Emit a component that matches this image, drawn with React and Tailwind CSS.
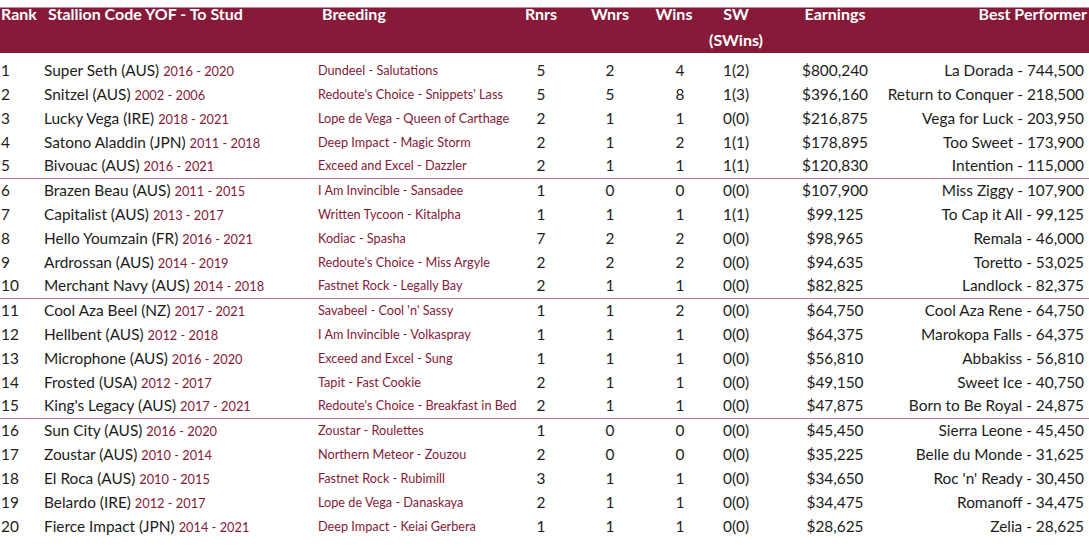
const rows = [
  ['1', 'Super Seth (AUS)', '2016 - 2020', 'Dundeel - Salutations', '5', '2', '4', '1(2)', '$800,240', 'La Dorada - 744,500'],
  ['2', 'Snitzel (AUS)', '2002 - 2006', "Redoute's Choice - Snippets' Lass", '5', '5', '8', '1(3)', '$396,160', 'Return to Conquer - 218,500'],
  ['3', 'Lucky Vega (IRE)', '2018 - 2021', 'Lope de Vega - Queen of Carthage', '2', '1', '1', '0(0)', '$216,875', 'Vega for Luck - 203,950'],
  ['4', 'Satono Aladdin (JPN)', '2011 - 2018', 'Deep Impact - Magic Storm', '2', '1', '2', '1(1)', '$178,895', 'Too Sweet - 173,900'],
  ['5', 'Bivouac (AUS)', '2016 - 2021', 'Exceed and Excel - Dazzler', '2', '1', '1', '1(1)', '$120,830', 'Intention - 115,000'],
  ['6', 'Brazen Beau (AUS)', '2011 - 2015', 'I Am Invincible - Sansadee', '1', '0', '0', '0(0)', '$107,900', 'Miss Ziggy - 107,900'],
  ['7', 'Capitalist (AUS)', '2013 - 2017', 'Written Tycoon - Kitalpha', '1', '1', '1', '1(1)', '$99,125', 'To Cap it All - 99,125'],
  ['8', 'Hello Youmzain (FR)', '2016 - 2021', 'Kodiac - Spasha', '7', '2', '2', '0(0)', '$98,965', 'Remala - 46,000'],
  ['9', 'Ardrossan (AUS)', '2014 - 2019', "Redoute's Choice - Miss Argyle", '2', '2', '2', '0(0)', '$94,635', 'Toretto - 53,025'],
  ['10', 'Merchant Navy (AUS)', '2014 - 2018', 'Fastnet Rock - Legally Bay', '2', '1', '1', '0(0)', '$82,825', 'Landlock - 82,375'],
  ['11', 'Cool Aza Beel (NZ)', '2017 - 2021', "Savabeel - Cool 'n' Sassy", '1', '1', '2', '0(0)', '$64,750', 'Cool Aza Rene - 64,750'],
  ['12', 'Hellbent (AUS)', '2012 - 2018', 'I Am Invincible - Volkaspray', '1', '1', '1', '0(0)', '$64,375', 'Marokopa Falls - 64,375'],
  ['13', 'Microphone (AUS)', '2016 - 2020', 'Exceed and Excel - Sung', '1', '1', '1', '0(0)', '$56,810', 'Abbakiss - 56,810'],
  ['14', 'Frosted (USA)', '2012 - 2017', 'Tapit - Fast Cookie', '2', '1', '1', '0(0)', '$49,150', 'Sweet Ice - 40,750'],
  ['15', "King's Legacy (AUS)", '2017 - 2021', "Redoute's Choice - Breakfast in Bed", '2', '1', '1', '0(0)', '$47,875', 'Born to Be Royal - 24,875'],
  ['16', 'Sun City (AUS)', '2016 - 2020', 'Zoustar - Roulettes', '1', '0', '0', '0(0)', '$45,450', 'Sierra Leone - 45,450'],
  ['17', 'Zoustar (AUS)', '2010 - 2014', 'Northern Meteor - Zouzou', '2', '0', '0', '0(0)', '$35,225', 'Belle du Monde - 31,625'],
  ['18', 'El Roca (AUS)', '2010 - 2015', 'Fastnet Rock - Rubimill', '3', '1', '1', '0(0)', '$34,650', "Roc 'n' Ready - 30,450"],
  ['19', 'Belardo (IRE)', '2012 - 2017', 'Lope de Vega - Danaskaya', '2', '1', '1', '0(0)', '$34,475', 'Romanoff - 34,475'],
  ['20', 'Fierce Impact (JPN)', '2014 - 2021', 'Deep Impact - Keiai Gerbera', '1', '1', '1', '0(0)', '$28,625', 'Zelia - 28,625'],
]

const App = () => {
  return (
    <div className="w-[1089px] h-[555px] bg-white pt-[7px] overflow-hidden font-['Lato',sans-serif] text-[#1c1c1c]">
      {/* Header */}
      <div className="h-[46px] bg-[#861a38] border-t border-[#c6899a] text-white font-bold text-[16px] leading-[26px]">
        <div className="flex -mt-[7px]">
          <div className="w-[44px] pl-[1px]">Rank</div>
          <div className="w-[274px] pl-[4px] whitespace-nowrap">Stallion Code YOF - To Stud</div>
          <div className="w-[192px] pl-[4px]">Breeding</div>
          <div className="w-[62px] text-center">Rnrs</div>
          <div className="w-[76px] text-center">Wnrs</div>
          <div className="w-[64px] text-center pr-[12px]">Wins</div>
          <div className="w-[48px] text-center">
            <div>SW</div>
            <div className="-mx-[10px]">(SWins)</div>
          </div>
          <div className="w-[150px] text-center">Earnings</div>
          <div className="w-[177px] flex justify-end whitespace-nowrap">Best Performer</div>
        </div>
      </div>

      {/* Rows */}
      <div className="mt-[6px]">
        {rows.map((r) => {
          const divider = r[0] === '5' || r[0] === '10' || r[0] === '15'
          return (
            <div
              key={r[0]}
              className={`flex items-center h-[24px] text-[15.4px] ${divider ? 'border-b border-[#c7798f] pb-[2px]' : ''}`}
            >
              <div className="w-[44px] pl-[1px]">{r[0]}</div>
              <div className="w-[274px] whitespace-nowrap">
                {r[1]} <span className="text-[12.8px] text-[#861a38]">{r[2]}</span>
              </div>
              <div className="w-[192px] text-[12.7px] text-[#861a38] whitespace-nowrap">{r[3]}</div>
              <div className="w-[62px] text-center">{r[4]}</div>
              <div className="w-[76px] text-center">{r[5]}</div>
              <div className="w-[64px] text-center">{r[6]}</div>
              <div className="w-[48px] text-center">{r[7]}</div>
              <div className="w-[150px] text-center">{r[8]}</div>
              <div className="w-[174px] flex justify-end whitespace-nowrap">{r[9]}</div>
            </div>
          )
        })}
      </div>
    </div>
  )
}

export default App
